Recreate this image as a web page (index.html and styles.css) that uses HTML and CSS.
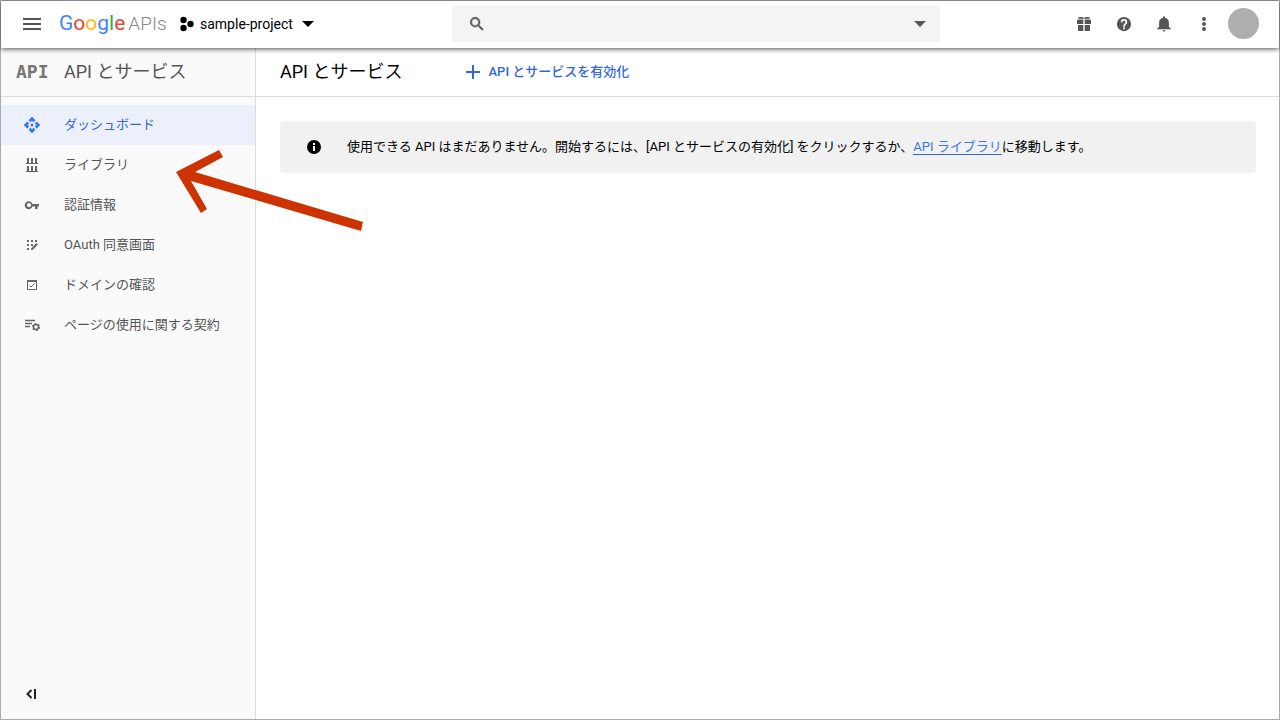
FILE: index.html
```html
<!DOCTYPE html>
<html lang="ja">
  <head>
    <meta charset="UTF-8" />
    <meta name="viewport" content="width=device-width, initial-scale=1.0" />
    <title>API とサービス</title>
    <link rel="stylesheet" href="styles.css">
  </head>
  <body>
    <div class="page">
      <header class="topbar">
        <button class="icon-button menu-button" type="button" aria-label="メニュー">
          <svg width="18" height="12" viewBox="0 0 18 12" fill="currentColor">
            <path d="M0 0h18v2H0zM0 5h18v2H0zM0 10h18v2H0z" />
          </svg>
        </button>
        <a class="logo" href="#"><span class="logo-google"><span class="blue">G</span><span class="red">o</span><span class="yellow">o</span><span class="blue">g</span><span class="green">l</span><span class="red">e</span></span><span class="logo-apis">APIs</span></a>
        <button class="project" type="button">
          <svg width="14" height="16" viewBox="0 0 14 16">
            <circle cx="3.5" cy="4" r="3.2" />
            <circle cx="3.5" cy="12" r="3.2" />
            <circle cx="10.5" cy="8" r="3.2" />
          </svg>
          <span>sample-project</span>
          <svg class="caret" width="12" height="6" viewBox="0 0 12 6">
            <path d="M0 0h12L6 6z" />
          </svg>
        </button>

        <div class="search">
          <svg width="18" height="18" viewBox="0 0 24 24" fill="currentColor">
            <path d="M15.5 14h-.79l-.28-.27A6.47 6.47 0 0 0 16 9.5 6.5 6.5 0 1 0 9.5 16c1.61 0 3.09-.59 4.23-1.57l.27.28v.79l5 4.99L20.49 19l-4.99-5zm-6 0a4.5 4.5 0 1 1 0-9 4.5 4.5 0 0 1 0 9z" stroke="currentColor" stroke-width=".7" />
          </svg>
          <input class="search-input" type="text" aria-label="検索" />
          <button class="icon-button search-toggle" type="button" aria-label="検索オプション">
            <svg width="12" height="6" viewBox="0 0 12 6" fill="currentColor">
              <path d="M0 0h12L6 6z" />
            </svg>
          </button>
        </div>

        <div class="tools">
          <button class="icon-button" type="button" aria-label="ギフト">
            <svg width="14" height="14" viewBox="0 0 14 14" fill="currentColor">
              <path d="M1.5 0h4L7 1l1.500-1h4v1.800H8L7 1.400 6 1.800H1.500zM1 2.500h5.300V7H0V3.500a1 1 0 0 1 1-1zM7.700 2.500H13a1 1 0 0 1 1 1V7H7.700zM1 8h5.300v6H2a1 1 0 0 1-1-1zM7.700 8H13v5a1 1 0 0 1-1 1H7.700z" />
            </svg>
          </button>
          <button class="icon-button" type="button" aria-label="ヘルプ">
            <svg width="18" height="18" viewBox="0 0 24 24" fill="currentColor">
              <path d="M12 2.500a9.500 9.500 0 1 0 0 19 9.500 9.500 0 0 0 0-19zm1.200 16.500h-2.400v-2.400h2.400V19zm2.400-7.400-1 1c-.9.900-1.400 1.500-1.400 2.900h-2.400V15c0-1.100.5-2 1.200-2.800l1.300-1.300c.4-.4.6-.8.600-1.400a1.900 1.900 0 0 0-3.800 0H7.700a4.300 4.300 0 0 1 8.600 0c0 .8-.3 1.600-.7 2.100z" />
            </svg>
          </button>
          <button class="icon-button" type="button" aria-label="通知">
            <svg width="18" height="18" viewBox="0 0 24 24" fill="currentColor">
              <path d="M12 22c1.100 0 2-.8 2-1.800h-4c0 1 .9 1.800 2 1.800zm6.500-6V10c0-3.100-1.800-5.600-5-6.300V3a1.500 1.500 0 0 0-3 0v.7c-3.200.7-5 3.200-5 6.300v6L3 17.500V19h18v-1.500z" />
            </svg>
          </button>
          <button class="icon-button" type="button" aria-label="その他">
            <svg width="4" height="14" viewBox="0 0 4 14" fill="currentColor">
              <circle cx="2" cy="2" r="2" />
              <circle cx="2" cy="7" r="2" />
              <circle cx="2" cy="12" r="2" />
            </svg>
          </button>
          <button class="avatar" type="button" aria-label="アカウント"></button>
        </div>
      </header>

      <div class="body">
        <aside class="sidebar">
          <div class="sidebar-title">
            <span class="api-mark">API</span>
            <h2>API とサービス</h2>
          </div>
          <nav class="nav">
            <a class="nav-item active" href="#">
              <svg width="16" height="16" viewBox="0 0 16 16" fill="currentColor">
                <path d="M8 0l3.200 3.200-1.700 1.700L8 3.500 6.500 4.900 4.800 3.200zM8 16l-3.200-3.200 1.700-1.700L8 12.500l1.500-1.400 1.700 1.700zM0 8l3.200-3.200 1.700 1.700L3.500 8l1.400 1.500-1.700 1.700zM16 8l-3.200 3.200-1.700-1.700L12.500 8l-1.400-1.500 1.700-1.700z" stroke="currentColor" stroke-width=".6" />
                <circle cx="8" cy="8" r="1.500" />
              </svg>
              ダッシュボード
            </a>
            <a class="nav-item" href="#">
              <svg width="16" height="16" viewBox="0 0 16 16" fill="currentColor">
                <path d="M3 1h2v5h2V1h2v5h2V1h2v5h1v1H2V6h1zM3 9h2v5h2V9h2v5h2V9h2v5h1v1H2v-1h1z" />
              </svg>
              ライブラリ
            </a>
            <a class="nav-item" href="#">
              <svg width="16" height="16" viewBox="0 0 16 16" fill="currentColor">
                <path d="M8.500 7A4 4 0 1 0 8.500 9.500H11V12h2.500V9.500H15V7zM5 10.200a2.100 2.100 0 1 1 0-4.200 2.100 2.100 0 0 1 0 4.200z" />
              </svg>
              認証情報
            </a>
            <a class="nav-item" href="#">
              <svg width="16" height="16" viewBox="0 0 16 16" fill="currentColor">
                <path d="M3 3h2v2H3zM7 3h2v2H7zM11 3h2v2h-2zM3 7h2v2H3zM7 7h2v2H7zM3 11h2v2H3z" />
                <path d="M7 13v-1.500L12.500 6 14 7.500 8.500 13z" />
              </svg>
              OAuth 同意画面
            </a>
            <a class="nav-item" href="#">
              <svg width="16" height="16" viewBox="0 0 16 16" fill="none" stroke="currentColor">
                <path d="M3.500 3.500h9v9h-9z" />
                <path d="M3 4h10" stroke-width="2" />
                <path d="M5.500 8.500L7 10l3.500-3.500" />
              </svg>
              ドメインの確認
            </a>
            <a class="nav-item" href="#">
              <svg width="16" height="16" viewBox="0 0 16 16" fill="none" stroke="currentColor">
                <path d="M1 3.500h10M1 6.500h7M1 9.500h5" stroke-width="1.400" />
                <circle cx="12" cy="10" r="2.500" stroke-width="1.500" />
                <circle cx="12" cy="10" r="3.500" stroke-width="1.200" stroke-dasharray="1.830 1.830" />
              </svg>
              ページの使用に関する契約
            </a>
          </nav>
          <button class="icon-button collapse" type="button" aria-label="メニューを閉じる">
            <svg width="11" height="10" viewBox="0 0 11 10" fill="none" stroke="currentColor">
              <path d="M5.500 1L1.500 5l4 4" stroke-width="2" />
              <path d="M9 0v10" stroke-width="2" />
            </svg>
          </button>
        </aside>

        <main class="main">
          <div class="main-header">
            <h1>API とサービス</h1>
            <button class="enable-button" type="button">
              <svg width="14" height="14" viewBox="0 0 14 14" fill="currentColor">
                <path d="M6 0h2v6h6v2H8v6H6V8H0V6h6z" />
              </svg>
              API とサービスを有効化
            </button>
          </div>
          <div class="notice">
            <svg width="14" height="14" viewBox="0 0 14 14">
              <circle cx="7" cy="7" r="7" />
              <path d="M6 3h2v2H6zM6 6h2v5H6z" fill="#fff" />
            </svg>
            <p>使用できる API はまだありません。開始するには、[API とサービスの有効化] をクリックするか、<a href="#">API ライブラリ</a>に移動します。</p>
          </div>
        </main>
      </div>

      <!-- 「ライブラリ」を指す矢印 -->
      <svg class="arrow" width="190" height="84" viewBox="0 0 190 84" fill="#cc3300">
        <path d="M1 23L44 1l4 7-28 15 168 50-2 9L16 32l16 28-6 4z" />
      </svg>
    </div>
  </body>
</html>
```
FILE: styles.css
```css
* {
  box-sizing: border-box;
}

body {
  margin: 0;
  font-family: Roboto, "Noto Sans CJK JP", sans-serif;
  font-size: 13px;
  line-height: 20px;
  color: #000;
  background-color: #fff;
}

button {
  padding: 0;
  border: none;
  background: none;
  font: inherit;
  color: inherit;
  cursor: pointer;
}

svg {
  display: block;
  flex-shrink: 0;
}

h1,
h2 {
  margin: 0;
  font-size: 18px;
  font-weight: 400;
  line-height: 24px;
}

.page {
  position: relative;
  display: flex;
  flex-direction: column;
  min-height: 100vh;
  border: 1px solid #aaa;
}

.topbar {
  position: relative;
  z-index: 1;
  display: flex;
  align-items: center;
  height: 47px;
  padding: 0 16px 2px 11px;
  background-color: #fff;
  box-shadow: 0 1px 5px rgba(0, 0, 0, 0.7);
}

.icon-button {
  display: flex;
  align-items: center;
  justify-content: center;
  flex-shrink: 0;
  width: 40px;
  height: 40px;
  color: #555;
}

.logo {
  display: flex;
  align-items: baseline;
  gap: 3px;
  width: 120px;
  padding-left: 7px;
  line-height: 28px;
  text-decoration: none;
}

.logo-google {
  font-size: 21px;
  font-weight: 400;
}

.logo-apis {
  font-size: 19px;
  font-weight: 300;
  color: #888;
}

.blue {
  color: #4285f4;
}

.red {
  color: #ea4335;
}

.yellow {
  color: #fbbc05;
}

.green {
  color: #34a853;
}

.project {
  display: flex;
  align-items: center;
  gap: 6px;
  width: 280px;
  padding-left: 8px;
  font-size: 14px;
  white-space: nowrap;
}

.caret {
  margin-left: 3px;
}

.search {
  display: flex;
  flex: 0 1 488px;
  align-items: center;
  height: 36px;
  padding-left: 16px;
  border-radius: 2px;
  background-color: #f4f4f4;
  color: #555;
}

.search-input {
  flex: 1;
  min-width: 0;
  height: 36px;
  padding: 0 12px;
  border: none;
  outline: none;
  background: none;
  font: inherit;
}

.search-toggle {
  height: 36px;
}

.tools {
  display: flex;
  align-items: center;
  margin-left: auto;
}

.avatar {
  width: 31px;
  height: 31px;
  margin: 0 4px;
  border-radius: 50%;
  background-color: #aeaeae;
}

.body {
  display: flex;
  flex: 1;
}

.sidebar {
  display: flex;
  flex-direction: column;
  width: 255px;
  flex-shrink: 0;
  border-right: 1px solid #ddd;
  background-color: #fafafa;
}

.sidebar-title,
.main-header {
  display: flex;
  align-items: center;
  height: 49px;
  border-bottom: 1px solid #ddd;
}

.sidebar-title {
  padding-left: 15px;
  color: #555;
}

.api-mark {
  width: 48px;
  font-family: "DejaVu Sans Mono", monospace;
  font-size: 18px;
  font-weight: 700;
  line-height: 24px;
  color: #757575;
}

.nav {
  padding-top: 8px;
}

.nav-item {
  display: flex;
  align-items: center;
  gap: 24px;
  height: 40px;
  padding-left: 23px;
  color: #555;
  text-decoration: none;
}

.nav-item svg {
  color: #666;
}

.nav-item.active {
  background-color: #ebf0fa;
  color: #3367d6;
}

.nav-item.active svg {
  color: #3b78e7;
}

.collapse {
  margin: auto 0 5px 10px;
  color: #222;
}

.main {
  flex: 1;
  min-width: 0;
}

.main-header {
  gap: 64px;
  padding-left: 24px;
}

.enable-button {
  display: flex;
  align-items: center;
  gap: 8px;
  font-weight: 500;
  color: #3367d6;
}

.notice {
  display: flex;
  align-items: center;
  gap: 26px;
  min-height: 52px;
  margin: 24px 23px 24px 24px;
  padding: 0 27px;
  border-radius: 4px;
  background-color: #f1f1f1;
}

.notice p {
  margin: 0;
}

.notice a {
  border-bottom: 1px solid #3367d6;
  color: #3b78e7;
  text-decoration: none;
}

.arrow {
  position: absolute;
  top: 148px;
  left: 174px;
  z-index: 2;
  pointer-events: none;
}
```
